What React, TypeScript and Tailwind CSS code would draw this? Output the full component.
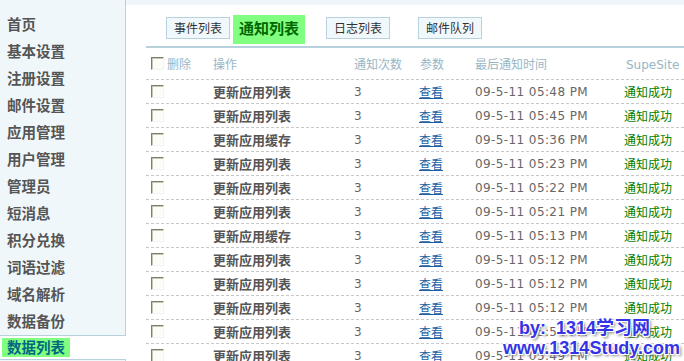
const menu = [
  '首页',
  '基本设置',
  '注册设置',
  '邮件设置',
  '应用管理',
  '用户管理',
  '管理员',
  '短消息',
  '积分兑换',
  '词语过滤',
  '域名解析',
  '数据备份',
]

const rows = [
  { op: '更新应用列表', time: '09-5-11 05:48 PM' },
  { op: '更新应用列表', time: '09-5-11 05:45 PM' },
  { op: '更新应用缓存', time: '09-5-11 05:36 PM' },
  { op: '更新应用列表', time: '09-5-11 05:23 PM' },
  { op: '更新应用列表', time: '09-5-11 05:22 PM' },
  { op: '更新应用列表', time: '09-5-11 05:21 PM' },
  { op: '更新应用缓存', time: '09-5-11 05:13 PM' },
  { op: '更新应用列表', time: '09-5-11 05:12 PM' },
  { op: '更新应用列表', time: '09-5-11 05:12 PM' },
  { op: '更新应用列表', time: '09-5-11 05:12 PM' },
  { op: '更新应用列表', time: '09-5-11 05:54 PM' },
  { op: '更新应用列表', time: '09-5-11 05:49 PM' },
]

const cjk = '[font-family:"Noto_Sans_CJK_SC",sans-serif]'

const Check = () => (
  <span className="box-border inline-block h-[13px] w-[13px] border-t border-l border-t-[#7f7d6c] border-l-[#7f7d6c] border-r border-b border-r-[#f4f3ee] border-b-[#f4f3ee] bg-[#fcfcf8] shadow-[inset_1px_1px_0_#c9c6b6]" />
)

const Tab = ({ label }: { label: string }) => (
  <div className="mt-[2px] box-border flex h-[22px] w-[64px] items-center justify-center border border-[#b7d2dc] bg-[#f1f8fb] text-[12px] text-[#333]">
    {label}
  </div>
)

const cols = 'grid grid-cols-[67px_141px_65px_56px_149px_1fr] items-center'

export default function App() {
  return (
    <div
      className={`relative flex h-[361px] w-[684px] overflow-hidden bg-white ${cjk}`}
    >
      {/* sidebar */}
      <div className="flex w-[126px] shrink-0 flex-col">
        <div className="box-border flex shrink-0 flex-col border-r border-b border-[#b7d2dc] bg-[#f0f7fb] pt-[11px]">
          {menu.map((m) => (
            <div
              key={m}
              className="flex h-[27px] items-center pl-[7px] text-[14.5px] font-bold leading-none text-[#555]"
            >
              {m}
            </div>
          ))}
        </div>
        <div className="flex h-[23px] shrink-0 items-center pl-[2px]">
          <span className="flex h-[19px] items-center bg-[#80ff80] px-[5px] text-[14.5px] font-bold leading-none text-[#006a80]">
            数据列表
          </span>
        </div>
        <div className="box-border flex-1 border-t border-r border-[#b7d2dc] bg-[#f0f7fb]" />
      </div>

      {/* main */}
      <div className="flex flex-1 flex-col">
        <div className="h-[5px] shrink-0 bg-[#eef6fa]" />
        <div className="shrink-0 pl-[20px]">
          <div className="mt-[10px] flex items-start pl-[20px]">
            <Tab label="事件列表" />
            <div className="ml-[3px] flex h-[29px] w-[72px] items-center justify-center bg-[#80ff80] pb-[2px] text-[15px] font-bold text-[#006600]">
              通知列表
            </div>
            <div className="ml-[21px]">
              <Tab label="日志列表" />
            </div>
            <div className="ml-[28px]">
              <Tab label="邮件队列" />
            </div>
          </div>
          <div className="mt-[2px] h-[2px] bg-[#b7d2dc]" />

          <div
            className={`${cols} h-[32px] border-b border-dashed border-[#c8c8c8] text-[12px] text-[#97b6c6]`}
          >
            <div className="flex items-center gap-[3px] pl-[5px]">
              <Check />
              <span>删除</span>
            </div>
            <div>操作</div>
            <div>通知次数</div>
            <div className="pl-[1px]">参数</div>
            <div>最后通知时间</div>
            <div className="pl-[2px] pt-[3px] [font-family:'DejaVu_Sans',sans-serif] text-[12px]">
              SupeSite
            </div>
          </div>

          {rows.map((r, i) => (
            <div
              key={i}
              className={`${cols} h-[24px] border-b border-dashed border-[#c8c8c8] text-[12px]`}
            >
              <div className="flex pl-[5px]">
                <Check />
              </div>
              <div className="text-[13px] font-bold text-[#555]">{r.op}</div>
              <div className="[font-family:'DejaVu_Sans',sans-serif] text-[#666]">
                3
              </div>
              <div>
                <span className="text-[#1c5fa6] underline">查看</span>
              </div>
              <div className="[font-family:'DejaVu_Sans',sans-serif] text-[12px] tracking-[0.4px] text-[#666]">
                {r.time}
              </div>
              <div className="text-[#008000]">通知成功</div>
            </div>
          ))}
        </div>
      </div>

      {/* watermark */}
      <div className="absolute top-[318px] left-[503px] flex flex-col text-[18px] leading-[20px] font-bold text-[#3434e6] [font-family:'Liberation_Sans','Noto_Sans_CJK_SC',sans-serif] [text-shadow:1px_1px_0_#fff,-1px_-1px_0_#fff,1px_-1px_0_#fff,-1px_1px_0_#fff,2px_2px_3px_#777]">
        <div className="pl-[16px] whitespace-pre">by:  1314学习网</div>
        <div>www.1314Study.com</div>
      </div>
    </div>
  )
}
